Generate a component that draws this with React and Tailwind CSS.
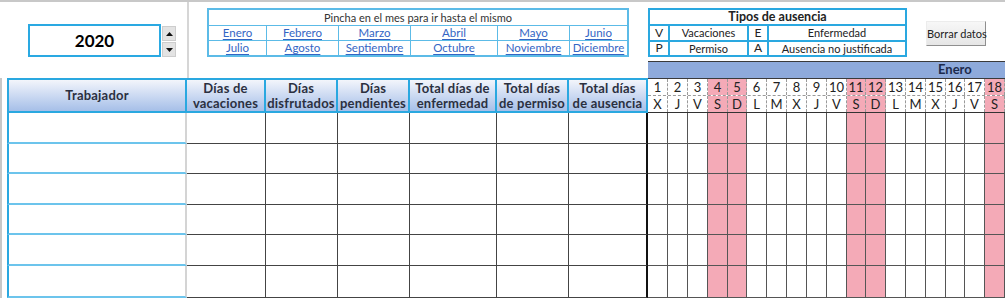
const months = [
  ['Enero', 'Julio'],
  ['Febrero', 'Agosto'],
  ['Marzo', 'Septiembre'],
  ['Abril', 'Octubre'],
  ['Mayo', 'Noviembre'],
  ['Junio', 'Diciembre'],
]
const monthWidths = ['w-[57px]', 'w-[72px]', 'w-[72px]', 'w-[87px]', 'w-[72px]', 'flex-1']

const columns = [
  { label: 'Días de vacaciones', lines: ['Días de', 'vacaciones'], w: 'w-[79px]' },
  { label: 'Días disfrutados', lines: ['Días', 'disfrutados'], w: 'w-[72px]' },
  { label: 'Días pendientes', lines: ['Días', 'pendientes'], w: 'w-[72px]' },
  { label: 'Total días de enfermedad', lines: ['Total días de', 'enfermedad'], w: 'w-[87px]' },
  { label: 'Total días de permiso', lines: ['Total días', 'de permiso'], w: 'w-[72px]' },
  { label: 'Total días de ausencia', lines: ['Total días', 'de ausencia'], w: 'w-[79px]' },
]

const letters = ['X', 'J', 'V', 'S', 'D', 'L', 'M', 'X', 'J', 'V', 'S', 'D', 'L', 'M', 'X', 'J', 'V', 'S']
const dayWidths = [20, 20, 20, 20, 19, 20, 20, 20, 20, 20, 19, 20, 20, 20, 20, 19, 20, 20]
const days = letters.map((l, i) => ({ n: i + 1, l, w: dayWidths[i], we: l === 'S' || l === 'D' }))

const rowHeights = ['h-[31px]', 'h-[30px]', 'h-[31px]', 'h-[30px]', 'h-[31px]', 'h-[32px]']

const Spinner = () => (
  <div className="ml-[1px] mt-[2px] flex flex-col w-[14px] gap-[1px]">
    <div className="h-[15px] bg-[#e3e3e3] border border-[#cdcdcd] flex items-center justify-center">
      <svg width="7" height="4" viewBox="0 0 7 4"><path d="M0 4 L3.5 0 L7 4 Z" fill="#111" /></svg>
    </div>
    <div className="h-[15px] bg-[#e3e3e3] border border-[#cdcdcd] flex items-center justify-center">
      <svg width="7" height="4" viewBox="0 0 7 4"><path d="M0 0 L7 0 L3.5 4 Z" fill="#111" /></svg>
    </div>
  </div>
)

const MonthsBox = () => (
  <div className="ml-[18px] mt-[6px] w-[422px] h-[49px] border-2 border-[#5cbbe7] flex flex-col text-[11.5px] leading-none">
    <div className="h-[16px] flex items-center justify-center text-[11px] text-[#333] border-b border-[#5cbbe7]">
      Pincha en el mes para ir hasta el mismo
    </div>
    {[0, 1].map(r => (
      <div key={r} className={`flex flex-1 ${r === 0 ? 'border-b border-[#5cbbe7]' : ''}`}>
        {months.map((m, i) => (
          <div
            key={m[r]}
            className={`${monthWidths[i]} ${i > 0 ? 'border-l border-[#5cbbe7]' : ''} flex items-center justify-center`}
          >
            <a href="#" className="text-[#3465c4] underline underline-offset-2">{m[r]}</a>
          </div>
        ))}
      </div>
    ))}
  </div>
)

const TypesBox = () => (
  <div className="ml-[19px] mt-[6px] w-[259px] h-[49px] border-2 border-[#2aa8e0] flex flex-col text-[11px] leading-none text-[#222]">
    <div className="h-[16px] flex items-center justify-center font-bold text-[12.5px] border-b-2 border-[#2aa8e0]">
      Tipos de ausencia
    </div>
    {[['V', 'Vacaciones', 'E', 'Enfermedad'], ['P', 'Permiso', 'A', 'Ausencia no justificada']].map((r, idx) => (
      <div key={r[0]} className={`flex flex-1 ${idx === 0 ? 'border-b-2 border-[#2aa8e0]' : ''}`}>
        <div className="w-[18px] flex items-center justify-center text-[12px]">{r[0]}</div>
        <div className="w-[79px] border-l-2 border-[#2aa8e0] flex items-center justify-center">{r[1]}</div>
        <div className="w-[20px] border-l-2 border-[#2aa8e0] flex items-center justify-center text-[12px]">{r[2]}</div>
        <div className="flex-1 border-l-2 border-[#2aa8e0] flex items-center justify-center">{r[3]}</div>
      </div>
    ))}
  </div>
)

export default function App() {
  return (
    <div className="w-[1005px] h-[298px] overflow-hidden bg-white font-[Lato,'Liberation_Sans',sans-serif] text-[#222]">
      <div className="h-[2px] bg-[#c8c8c8]" />

      <div className="flex h-[59px]">
        <div className="w-[187px] flex items-start pl-[28px] pt-[22px]">
          <div className="w-[133px] h-[33px] border-2 border-[#2aa9e2] flex items-center justify-center text-[17px] font-bold text-black">
            2020
          </div>
          <Spinner />
        </div>
        <div className="w-[2px] bg-[#d6d6d6]" />
        <MonthsBox />
        <TypesBox />
        <button className="ml-[19px] mt-[19px] w-[60px] h-[25px] px-0 whitespace-nowrap bg-linear-to-b from-[#f7f7f7] to-[#e6e6e6] border border-t-[#ececec] border-l-[#ececec] border-r-[#8f8f8f] border-b-[#8f8f8f] text-[11px] text-[#222] leading-none">
          Borrar datos
        </button>
      </div>

      <div className="flex">
        <div className="w-[648px] shrink-0">
          <div className="flex h-[17px]">
            <div className="w-[187px]" />
            <div className="w-[2px] bg-[#d6d6d6]" />
          </div>

          <div className="flex h-[35px] text-[13px] font-bold text-[#2b3040] leading-[15px] tracking-[0.2px]">
            <div className="w-[7px] border-l-2 border-[#c8c8c8]" />
            <div className="w-[180px] border-2 border-[#2aa8e0] bg-linear-to-b from-[#f3f5fb] to-[#a6bfe8] flex items-center justify-center">
              Trabajador
            </div>
            {columns.map(c => (
              <div
                key={c.label}
                className={`${c.w} border-y-2 border-r-2 border-[#2aa8e0] bg-linear-to-b from-[#f3f5fb] to-[#a6bfe8] flex flex-col items-center justify-center text-center whitespace-nowrap`}
              >
                <span>{c.lines[0]}</span>
                <span>{c.lines[1]}</span>
              </div>
            ))}
          </div>

          {rowHeights.map((h, r) => (
            <div key={r} className={`flex ${h}`}>
              <div className="w-[7px] border-l-2 border-[#c8c8c8]" />
              <div className="w-[180px] border-l-2 border-l-[#2aa8e0] border-b-2 border-b-[#6cc4ec] border-r-2 border-r-[#d4d4d4]" />
              {columns.map((c, i) => (
                <div
                  key={c.label}
                  className={`${c.w} border-b border-[#444] ${i === columns.length - 1 ? 'border-r-2 border-r-[#111]' : 'border-r border-r-[#444]'}`}
                />
              ))}
            </div>
          ))}
        </div>

        <div className="flex-1 overflow-hidden">
          <div className="h-[18px] bg-[#8eaadb] border-t border-b border-[#3a3a3a] pl-[290px] flex items-center text-[13px] font-bold text-[#1d2b4d] whitespace-nowrap">
            Enero
          </div>
          <div className="flex h-[17px] border-b border-dashed border-[#9a9a9a] text-[13px] leading-none">
            {days.map(d => (
              <div
                key={d.n}
                style={{ width: d.w }}
                className={`shrink-0 border-r border-dashed border-[#9a9a9a] flex items-center justify-center ${d.we ? 'bg-[#f4aab7]' : ''}`}
              >
                {d.n}
              </div>
            ))}
          </div>
          <div className="flex h-[17px] border-b border-[#333] text-[13px] leading-none">
            {days.map(d => (
              <div
                key={d.n}
                style={{ width: d.w }}
                className={`shrink-0 border-r border-dashed border-[#9a9a9a] flex items-center justify-center ${d.we ? 'bg-[#f4aab7]' : ''}`}
              >
                {d.l}
              </div>
            ))}
          </div>
          {rowHeights.map((h, r) => (
            <div key={r} className={`flex ${h}`}>
              {days.map(d => (
                <div
                  key={d.n}
                  style={{ width: d.w }}
                  className={`shrink-0 border-r border-b border-[#555] ${d.we ? 'bg-[#f4aab7]' : ''}`}
                />
              ))}
            </div>
          ))}
        </div>
      </div>
    </div>
  )
}
